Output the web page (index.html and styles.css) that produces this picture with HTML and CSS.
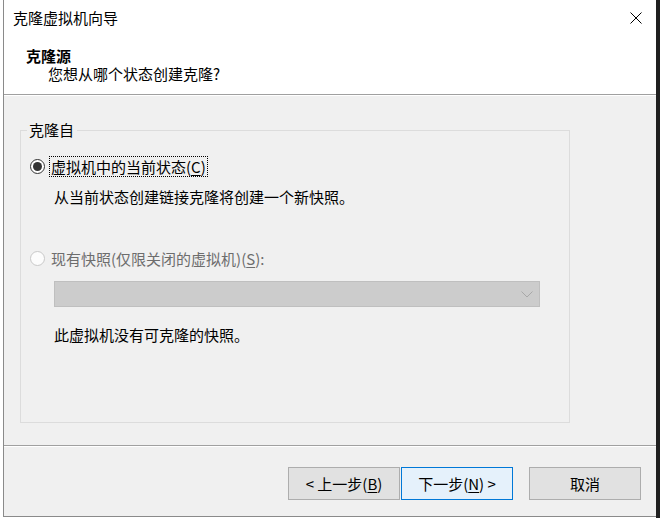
FILE: index.html
```html
<!DOCTYPE html>
<html lang="zh-CN">
<head>
<meta charset="utf-8">
<title>克隆虚拟机向导</title>
<link rel="stylesheet" href="styles.css">
</head>
<body>
<div class="screen">
  <div class="window">
    <header class="header">
      <div class="titlebar">
        <span class="title">克隆虚拟机向导</span>
        <svg class="close" width="12" height="12" viewBox="0 0 12 12"><path d="M0.5 0.5 L11.5 11.5 M11.5 0.5 L0.5 11.5" stroke="#000" stroke-width="1" fill="none"/></svg>
      </div>
      <div class="step-title">克隆源</div>
      <div class="step-sub">您想从哪个状态创建克隆?</div>
    </header>
    <main class="main">
      <fieldset class="group">
        <legend class="legend">克隆自</legend>
        <div class="group-body">
          <div class="radio-row first">
            <span class="radio checked"></span>
            <span class="label focus">虚拟机中的当前状态(<u>C</u>)</span>
          </div>
          <div class="desc">从当前状态创建链接克隆将创建一个新快照。</div>
          <div class="radio-row second">
            <span class="radio disabled"></span>
            <span class="label disabled-text">现有快照(仅限关闭的虚拟机)(<u>S</u>):</span>
          </div>
          <div class="combo">
            <svg class="chev" width="12" height="7" viewBox="0 0 12 7"><path d="M0.5 0.5 L6 6 L11.5 0.5" stroke="#a8a8a8" stroke-width="1" fill="none"/></svg>
          </div>
          <div class="desc note">此虚拟机没有可克隆的快照。</div>
        </div>
      </fieldset>
    </main>
    <footer class="footer">
      <button class="btn">&lt; 上一步(<u>B</u>)</button>
      <button class="btn primary">下一步(<u>N</u>) &gt;</button>
      <button class="btn cancel">取消</button>
    </footer>
  </div>
  <div class="shadow"></div>
</div>
</body>
</html>
```
FILE: styles.css
```css
* { box-sizing: border-box; }
html, body {
  margin: 0;
  padding: 0;
  background: #ffffff;
}
body {
  font-family: "Noto Sans CJK SC", "Noto Sans", sans-serif;
  font-size: 15px;
  color: #000;
}
.screen {
  display: flex;
  height: 518px;
  padding-left: 3px;
}
.window {
  width: 653px;
  height: 517px;
  border-left: 1px solid #8a8a8a;
  border-bottom: 1px solid #8a8a8a;
  display: flex;
  flex-direction: column;
}
.shadow {
  flex: 1;
  background: #1f1f1f;
}
.header {
  height: 95px;
  background: #fff;
  border-bottom: 1px solid #a0a0a0;
  padding-top: 8px;
}
.titlebar {
  display: flex;
  align-items: center;
  justify-content: space-between;
  height: 20px;
  padding-left: 9px;
  padding-right: 14px;
}
.title {
  line-height: 20px;
}
.close {
  display: block;
  margin-top: -1px;
}
.step-title {
  margin-top: 19px;
  padding-left: 22px;
  font-weight: bold;
  line-height: 18px;
}
.step-sub {
  padding-left: 44px;
  line-height: 18px;
}
.main {
  height: 350px;
  background: #f0f0f0;
  border-top: 1px solid #ffffff;
  padding-top: 24px;
  padding-left: 16px;
}
.group {
  margin: 0;
  padding: 0;
  width: 550px;
  border: 1px solid #dcdcdc;
}
.legend {
  margin-left: 6px;
  padding: 0 3px 0 2px;
  line-height: 20px;
}
.group-body {
  height: 282px;
  padding-top: 16px;
  padding-left: 9px;
}
.radio-row {
  display: flex;
  align-items: center;
  height: 21px;
}
.radio {
  width: 15px;
  height: 15px;
  border-radius: 50%;
  border: 1px solid #333;
  background: #fff;
  display: flex;
  align-items: center;
  justify-content: center;
  margin-right: 4px;
  flex: none;
}
.radio.checked::after {
  content: "";
  width: 9px;
  height: 9px;
  border-radius: 50%;
  background: #333;
}
.radio.disabled {
  border-color: #c8c8c8;
  background: #fcfcfc;
}
.label {
  line-height: 19px;
  padding: 0 1px;
  border: 1px dotted transparent;
}
.label.focus {
  border-color: #000;
}
.disabled-text {
  color: #6d6d6d;
}
.label u {
  text-underline-offset: 2px;
}
.desc {
  margin-left: 24px;
  line-height: 20px;
  margin-top: 10px;
}
.radio-row.second {
  margin-top: 41px;
}
.combo {
  margin-left: 24px;
  margin-top: 12px;
  width: 486px;
  height: 26px;
  background: #cccccc;
  border: 1px solid #bfbfbf;
  display: flex;
  align-items: center;
  justify-content: flex-end;
  padding-right: 6px;
}
.chev {
  display: block;
  margin-top: 1px;
}
.note {
  margin-top: 18px;
}
.footer {
  height: 71px;
  background: #f0f0f0;
  border-top: 1px solid #a0a0a0;
  box-shadow: inset 0 1px 0 #ffffff;
  display: flex;
  align-items: flex-start;
  justify-content: flex-end;
  padding-top: 21px;
  padding-right: 15px;
  gap: 1px;
}
.btn {
  width: 112px;
  height: 33px;
  font-family: inherit;
  font-size: 15px;
  color: #000;
  background: #e1e1e1;
  border: 1px solid #adadad;
  border-radius: 0;
  padding: 0;
  line-height: 20px;
}
.btn.primary {
  background: #e5f1fb;
  border-color: #0078d7;
}
.btn.cancel {
  margin-left: 15px;
}
.btn u {
  text-underline-offset: 2px;
}
```
